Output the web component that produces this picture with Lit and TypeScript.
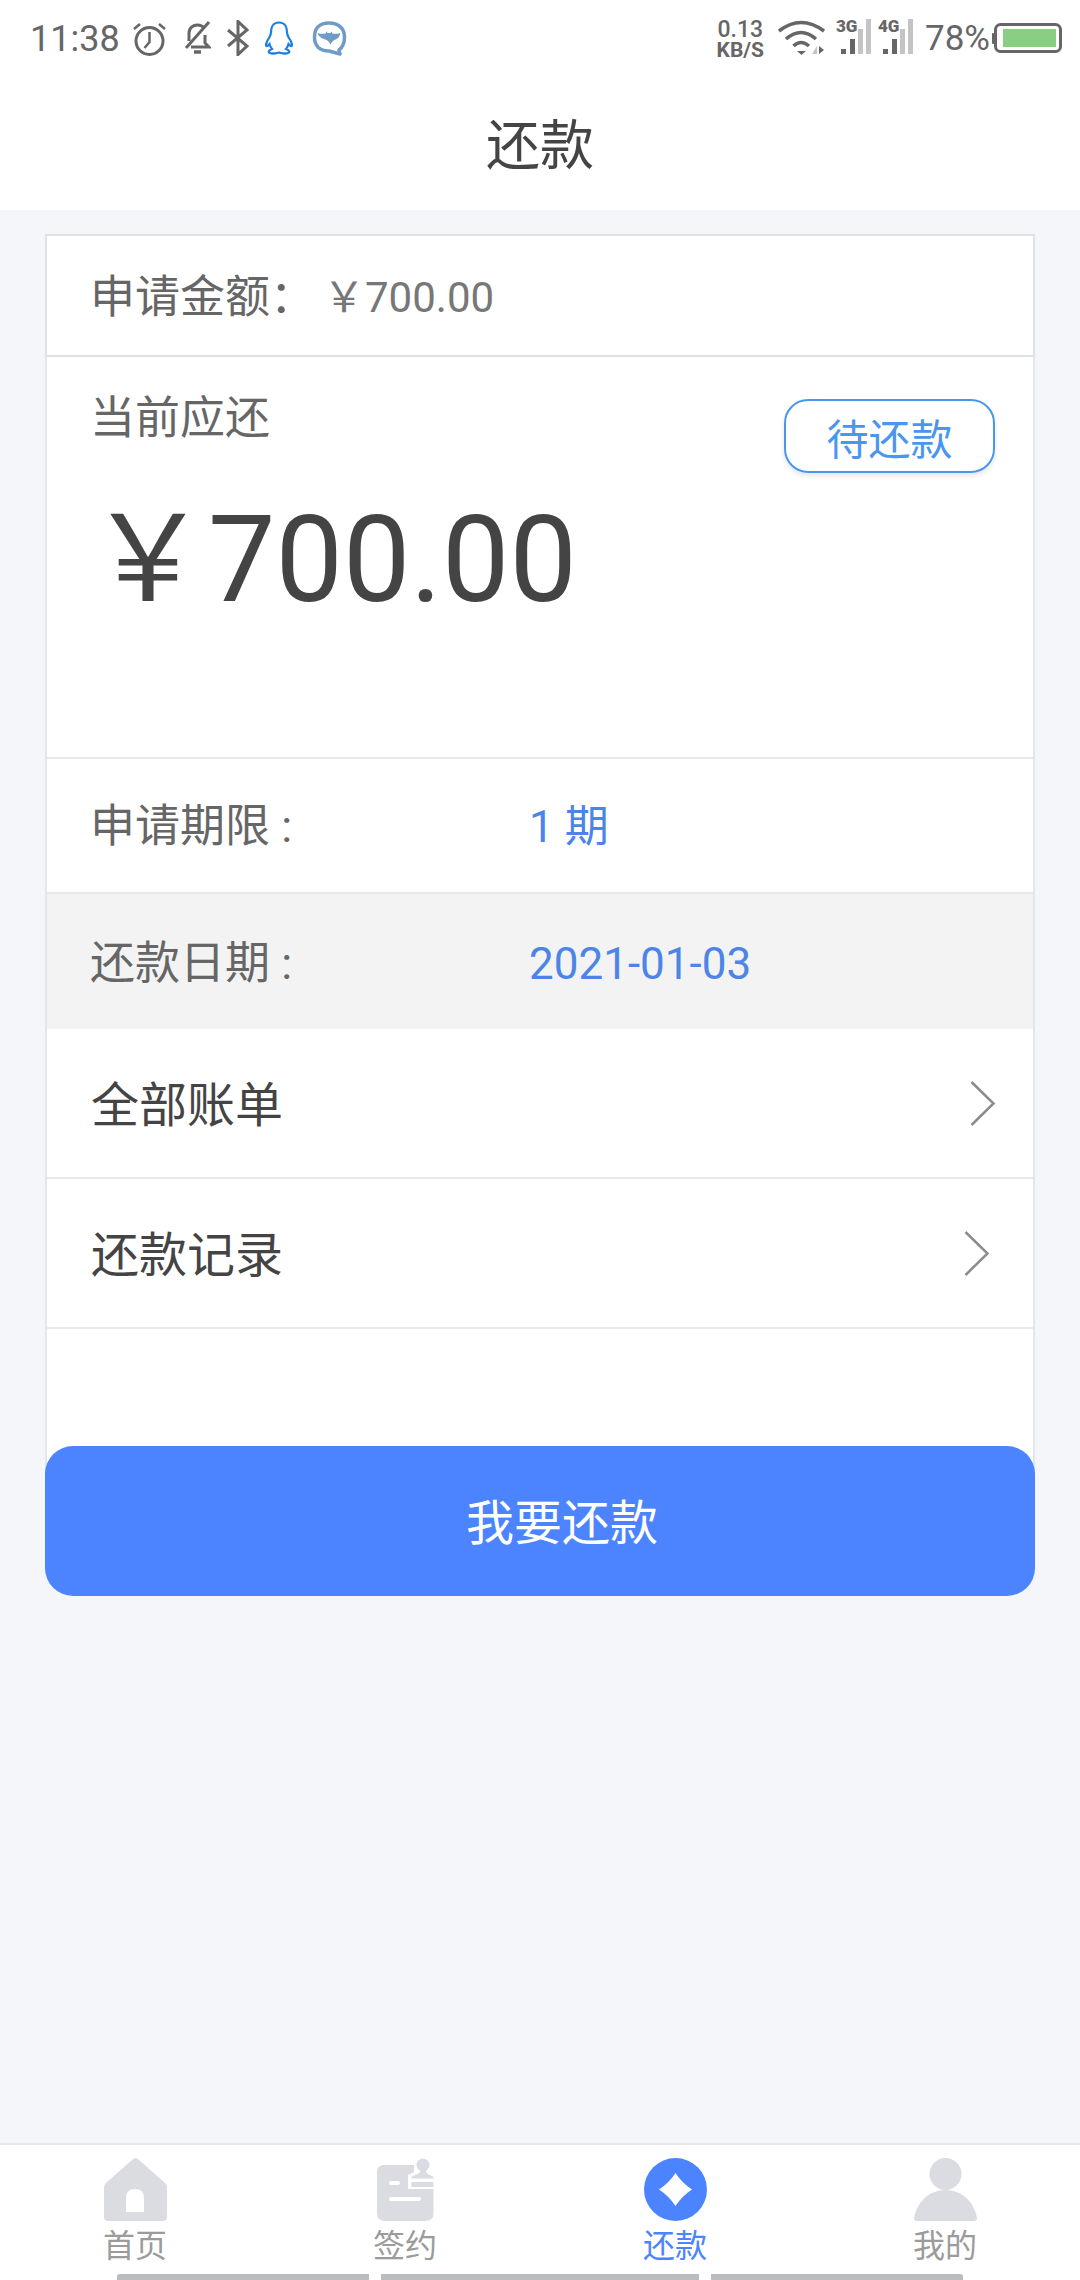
import { css, html, LitElement, svg } from "lit";
import { customElement } from "lit/decorators.js";

const tabs = [
  {
    label: "首页",
    icon: svg`<path d="M28.500 1.500q3-2.500 6 0L61 25q2 2 2 4v30q0 4-4 4H4q-4 0-4-4V29q0-2 2-4z" fill="#dbdce2"/><path d="M22 54V40q0-9 9-9t9 9v14z" fill="#fff"/>`,
  },
  {
    label: "签约",
    icon: svg`<path d="M10 7h41q8 0 8.500 8v40q0 8-8 8H11q-8 0-8-8V14q0-7 7-7z" fill="#dbdce2"/>
      <path d="M40 0h23v31H34V17l6-3z" fill="#fff"/>
      <circle cx="49" cy="7" r="6.500" fill="#dbdce2"/><path d="M46 12h6v2q1 2 5 3.500 3 1 3 3H37q0-2 3-3 4-1.500 6-3.500z" fill="#dbdce2"/>
      <rect x="37.500" y="24" width="22" height="5" fill="#dbdce2"/>
      <rect x="15" y="23" width="11" height="4" rx="2" fill="#fff"/><rect x="15" y="39" width="32" height="4" rx="2" fill="#fff"/>`,
  },
  {
    label: "还款",
    active: true,
    icon: svg`<circle cx="31.500" cy="31.500" r="31.500" fill="#4c84ff"/><path d="M31.500 15Q38 25 48 31.500 38 38 31.500 48 25 38 15 31.500 25 25 31.500 15z" fill="#fff"/>`,
  },
  {
    label: "我的",
    icon: svg`<circle cx="31.500" cy="16" r="16" fill="#dbdce2"/><path d="M0 60C3 44 15 32 31.500 32S60 44 63 60q0 3-3 3H3q-3 0-3-3z" fill="#dbdce2"/>`,
  },
];

@customElement("status-bar")
class StatusBar extends LitElement {
  static styles = css`
    :host {
      display: flex;
      align-items: center;
      height: 76px;
      padding: 0 18px 0 30px;
      color: #666;
      font-family: Roboto, sans-serif;
    }

    svg {
      display: block;
      flex: none;
    }

    .time {
      font-size: 36px;
      line-height: 40px;
      padding-top: 2px;
      margin-right: 13px;
    }

    .left {
      display: flex;
      align-items: center;
      flex: 1;
    }

    .alarm {
      margin-right: 18px;
    }
    .bell {
      margin-right: 15px;
    }
    .bt {
      margin-right: 14px;
    }
    .qq {
      margin-right: 18px;
    }

    .speed {
      display: flex;
      flex-direction: column;
      align-items: center;
      font-weight: 700;
      padding-top: 3px;
      margin-right: 14px;
    }

    .speed span:first-child {
      font-size: 23px;
      line-height: 20px;
      font-weight: 500;
    }

    .speed span:last-child {
      font-size: 21px;
      line-height: 20px;
    }

    .wifi {
      margin-right: 11px;
    }

    .sig {
      margin-right: 7px;
    }

    .sig text {
      font-size: 17px;
      font-weight: 900;
      fill: #666;
    }

    .pct {
      font-size: 35px;
      line-height: 40px;
      padding-top: 2px;
      margin: 0 2px 0 5px;
    }
  `;

  private signal(label: string) {
    return html`<svg class="sig" width="35" height="44" viewBox="0 0 35 44">
      <text x="0" y="16">${label}</text>
      <rect x="5" y="33" width="5" height="5" fill="#666" />
      <rect x="14" y="23" width="5" height="15" fill="#666" />
      <rect x="22" y="13" width="5" height="25" fill="#c4c4c4" />
      <rect x="30" y="3" width="5" height="35" fill="#c4c4c4" />
    </svg>`;
  }

  render() {
    return html`<div class="left">
        <span class="time">11:38</span>
        <svg class="alarm" width="33" height="36" viewBox="0 0 33 36" fill="none" stroke="#666">
          <circle cx="16.500" cy="21" r="13.500" stroke-width="3" />
          <path d="M16.500 12v10l-5 6" stroke-width="2.500" />
          <path d="M1 9l6-5M32 9l-6-5" stroke-width="2.500" />
        </svg>
        <svg class="bell" width="27" height="34" viewBox="0 0 27 34" fill="none" stroke="#666" stroke-width="3">
          <path d="M5 20v-8c0-5 4-8 8.500-8 3 0 5 1 6.500 3M21 14v8l4 4H7" />
          <path d="M25 1L2 27" />
          <path d="M10 31h7" stroke-width="3.500" />
        </svg>
        <svg class="bt" width="24" height="36" viewBox="0 0 24 36" fill="none" stroke="#666" stroke-width="3">
          <path d="M2 10l19 16-9 8.500V1.500L21 10 2 26" />
        </svg>
        <svg class="qq" width="30" height="34" viewBox="0 0 30 34" fill="none" stroke="#1a80e6" stroke-width="2.200">
          <path
            d="M15 1.500C8.500 1.500 7 7 7 11c0 3-1 4-2 6-2 3-3.500 7-2.500 8 1 .5 2-1 3-2 .5 2 1.500 4 2.500 5-2 1-4 2-3 3.500 1 1 5 1.500 10 0 5 1.500 9 1 10 0 1-1.500-1-2.500-3-3.500 1-1 2-3 2.500-5 1 1 2 2.500 3 2 1-1-.5-5-2.500-8-1-2-2-3-2-6 0-4-1.500-9.500-8-9.500z"
          />
        </svg>
        <svg width="35" height="36" viewBox="0 0 35 36" fill="none">
          <path
            d="M17 3C8 3 2.500 8 2.500 17S8 31 17 31l11 3-1-4c4-3 5.500-7 5.500-13C32.500 8 26 3 17 3z"
            stroke="#6f9bcb"
            stroke-width="3.500"
            stroke-linejoin="round"
          />
          <path
            d="M5.500 13c3 1 6 1 8 .5l1-2 1 1.500h3l1-1.500 1 2c2 .5 5 .5 8-.5-1 4-3 6-6 7-1.500 1-3 2-4 4.500-1-2.500-2.500-3.500-4-4.500-3-1-8-3-9-7z"
            fill="#6f9bcb"
          />
        </svg>
      </div>
      <div class="speed"><span>0.13</span><span>KB/S</span></div>
      <svg class="wifi" width="47" height="36" viewBox="0 0 47 36" fill="none" stroke="#666" stroke-width="3.500">
        <path d="M1 11Q23-6 46 11" />
        <path d="M8 19Q23 6 38 19" />
        <path d="M15.500 26Q23 19 31 26" />
        <path d="M19 31h9l-4.500 4z" fill="#666" stroke="none" />
        <path d="M34 34h5v-8z" fill="#c4c4c4" stroke="none" />
        <path d="M41 26v8l5-4z" fill="#666" stroke="none" />
      </svg>
      ${this.signal("3G")} ${this.signal("4G")}
      <span class="pct">78%</span>
      <svg width="70" height="30" viewBox="0 0 70 30">
        <rect x="0" y="10" width="4" height="11" rx="1" fill="#666" />
        <rect x="3.500" y="1.500" width="65" height="27" rx="5" fill="none" stroke="#666" stroke-width="3" />
        <rect x="11" y="6" width="53" height="18" fill="#8ace84" />
      </svg>`;
  }
}

@customElement("app-root")
class AppRoot extends LitElement {
  static styles = css`
    :host {
      display: flex;
      flex-direction: column;
      height: 2280px;
      background-color: #f5f6fa;
      font-family: Roboto, "Noto Sans CJK SC", sans-serif;
    }

    .head {
      background-color: #fff;
      height: 210px;
      flex: none;
    }

    .title {
      height: 130px;
      display: flex;
      align-items: center;
      justify-content: center;
      font-size: 54px;
      color: #444;
    }

    .main {
      flex: 1;
      padding: 24px 45px 0;
    }

    .amount {
      display: flex;
      align-items: center;
      box-sizing: border-box;
      height: 123px;
      padding: 5px 0 0 43px;
      background-color: #fff;
      border: 2px solid #e0e1e4;
      font-size: 45px;
      line-height: 60px;
      color: #666;
    }

    .amount b {
      font-weight: 400;
      font-size: 42px;
      color: #777;
      margin-left: 8px;
    }

    .card {
      background-color: #fff;
      border: solid #e4e5ea;
      border-width: 0 2px;
      height: 1119px;
    }

    .due {
      display: flex;
      justify-content: space-between;
      height: 402px;
      box-sizing: border-box;
      padding: 33px 38px 0 43px;
      border-bottom: 2px solid #e8e8e8;
    }

    .due-label {
      font-size: 45px;
      line-height: 58px;
      color: #666;
    }

    .due-sum {
      font-size: 120px;
      line-height: 140px;
      color: #444;
      margin: 42px 0 0 -2px;
    }

    .tag {
      box-sizing: border-box;
      width: 211px;
      height: 74px;
      margin-top: 9px;
      display: flex;
      align-items: center;
      justify-content: center;
      border: 2px solid #4a96ef;
      border-radius: 24px;
      box-shadow: 0 3px 5px #e6e8f0;
      font-size: 42px;
      color: #4a96ef;
    }

    .row {
      display: flex;
      align-items: center;
      box-sizing: border-box;
      padding-left: 43px;
      font-size: 45px;
      line-height: 60px;
      color: #666;
    }

    .row span {
      width: 439px;
    }

    .row b {
      font-weight: 400;
      font-size: 44px;
      color: #4c84e8;
    }

    .term {
      height: 135px;
      padding-top: 3px;
      border-bottom: 2px solid #e8e8e8;
    }

    .date {
      height: 135px;
      padding-top: 5px;
      background-color: #f3f3f3;
    }

    .link {
      display: flex;
      align-items: center;
      justify-content: space-between;
      box-sizing: border-box;
      height: 150px;
      padding-left: 44px;
      border-bottom: 2px solid #e8e8e8;
      font-size: 48px;
      color: #444;
    }

    .link span {
      margin-bottom: 5px;
    }

    .link svg {
      display: block;
    }

    .pay {
      margin-top: -30px;
      height: 150px;
      position: relative;
      display: flex;
      align-items: center;
      justify-content: center;
      border-radius: 28px;
      background-color: #4c84ff;
      font-size: 48px;
      color: #fff;
    }

    .pay span {
      margin: 0 0 5px 44px;
    }

    .tabs {
      flex: none;
      box-sizing: border-box;
      background-color: #fff;
      border-top: 2px solid #e6e6e8;
      display: flex;
      flex-direction: column;
      height: 137px;
    }

    .tab-row {
      display: grid;
      grid-template-columns: repeat(4, 1fr);
      padding-top: 13px;
    }

    .tab {
      display: flex;
      flex-direction: column;
      align-items: center;
      font-size: 32px;
      line-height: 40px;
      color: #9b9b9b;
    }

    .tab.on {
      color: #4c84ff;
    }

    .tab svg {
      display: block;
      margin-bottom: 5px;
    }

    .bars {
      margin-top: 8px;
      display: flex;
      justify-content: center;
      gap: 12px;
    }

    .bars i {
      height: 6px;
      background-color: #bbbcbe;
    }

    .bars i:nth-child(1) {
      width: 252px;
      border-radius: 3px 0 0 0;
    }

    .bars i:nth-child(2) {
      width: 318px;
    }

    .bars i:nth-child(3) {
      width: 252px;
      border-radius: 0 3px 0 0;
    }
  `;

  private chevron(right: number) {
    return html`<svg style="margin-right:${right}px" width="26" height="45" viewBox="0 0 26 45" fill="none" stroke="#8c8c8c" stroke-width="2.500">
      <path d="M1.500 1l22 21.500-22 21.500" />
    </svg>`;
  }

  render() {
    return html`<div class="head">
        <status-bar></status-bar>
        <div class="title">还款</div>
      </div>
      <div class="main">
        <div class="amount">申请金额：<b>￥700.00</b></div>
        <div class="card">
          <div class="due">
            <div>
              <div class="due-label">当前应还</div>
              <div class="due-sum">￥700.00</div>
            </div>
            <div class="tag">待还款</div>
          </div>
          <div class="row term"><span>申请期限 :</span><b>1 期</b></div>
          <div class="row date"><span>还款日期 :</span><b>2021-01-03</b></div>
          <div class="link"><span>全部账单</span>${this.chevron(37)}</div>
          <div class="link"><span>还款记录</span>${this.chevron(43)}</div>
        </div>
        <div class="pay"><span>我要还款</span></div>
      </div>
      <div class="tabs">
        <div class="tab-row">
          ${tabs.map(
            (t) => html`<div class="tab ${t.active ? "on" : ""}">
              <svg width="63" height="63" viewBox="0 0 63 63">${t.icon}</svg>
              ${t.label}
            </div>`
          )}
        </div>
        <div class="bars"><i></i><i></i><i></i></div>
      </div>`;
  }
}

declare global {
  interface HTMLElementTagNameMap {
    "app-root": AppRoot;
    "status-bar": StatusBar;
  }
}
